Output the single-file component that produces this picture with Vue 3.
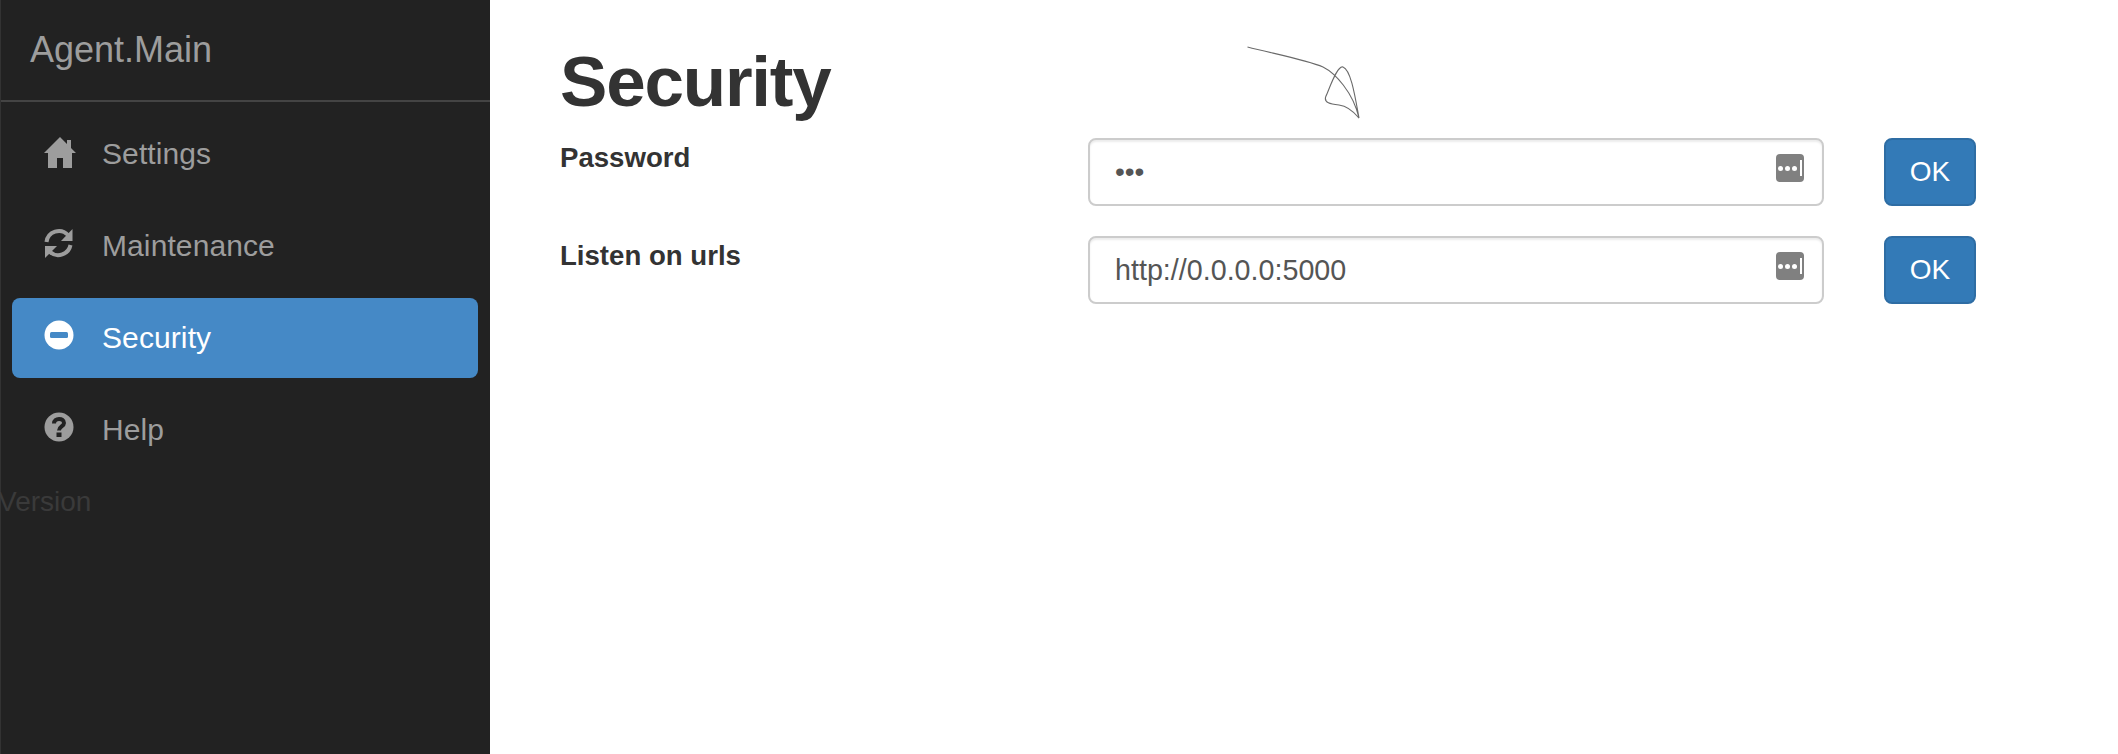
<script setup>
const items = [
  { label: 'Settings', icon: 'home' },
  { label: 'Maintenance', icon: 'refresh' },
  { label: 'Security', icon: 'minus', active: true },
  { label: 'Help', icon: 'help' },
]
const fields = [
  { label: 'Password', type: 'password', value: 'abc' },
  { label: 'Listen on urls', type: 'text', value: 'http://0.0.0.0:5000' },
]
</script>

<template>
  <div class="page">
    <aside class="sidebar">
      <div class="brand">Agent.Main</div>
      <nav class="nav">
        <a v-for="item in items" :key="item.label" class="nav-item" :class="{ active: item.active }">
          <svg class="nav-icon" viewBox="0 0 32 32" width="32" height="32" aria-hidden="true">
            <path v-if="item.icon === 'home'" fill="currentColor" d="M16 1 L23 8 V4 H27 V12 L32 17 H28 V32 H19 V22 H13 V32 H4 V17 H0 Z" />
            <g v-else-if="item.icon === 'refresh'" fill="none" stroke="currentColor" stroke-width="4">
              <path d="M2.5 14 A12.5 12.5 0 0 1 24 7" />
              <path d="M26.5 17 A12.5 12.5 0 0 1 6 24" />
              <path fill="currentColor" stroke="none" d="M28.5 1 V13 H17 Z" />
              <path fill="currentColor" stroke="none" d="M1 18 H13 L1 30 Z" />
            </g>
            <g v-else-if="item.icon === 'minus'">
              <circle cx="15" cy="15" r="14.5" fill="currentColor" />
              <rect x="6" y="12" width="18" height="6" rx="1.5" fill="#4589c6" />
            </g>
            <g v-else>
              <circle cx="15" cy="15" r="14.5" fill="currentColor" />
              <path fill="none" stroke="#222" stroke-width="4" d="M10 11.5 C10 5.5 20 5.5 20 11 C20 14.5 15 14.5 15 18.5" />
              <rect x="12.5" y="20.5" width="5" height="4.5" fill="#222" />
            </g>
          </svg>
          <span>{{ item.label }}</span>
        </a>
      </nav>
      <div class="version">Version</div>
    </aside>

    <main class="content">
      <h1 class="title">Security</h1>
      <form class="form" @submit.prevent>
        <div v-for="f in fields" :key="f.label" class="row">
          <label class="label">{{ f.label }}</label>
          <div class="input-box">
            <input class="input" :class="f.type" :type="f.type" :value="f.value" />
            <span class="key">
              <i></i><i></i><i></i><b></b>
            </span>
          </div>
          <button class="btn" type="button">OK</button>
        </div>
      </form>
      <svg class="scribble" viewBox="0 0 120 90" width="120" height="90" aria-hidden="true">
        <path fill="none" stroke="#6a6a6a" stroke-width="1.1" d="M0.5 1 C28 8 60 14 76 21 C88 27 106 46 112 72 C108 50 104 24 96 21 C90 19 82 44 79 50 C76 57 84 58 92 59 C100 60 107 66 112 72 L111 71" />
      </svg>
    </main>
  </div>
</template>

<style>
html, body { margin: 0; background: #fff; }
</style>

<style scoped>
.page {
  display: flex;
  width: 2118px;
  height: 754px;
  overflow: hidden;
  font-family: "Liberation Sans", Arial, sans-serif;
  color: #333;
}
.sidebar {
  width: 490px;
  flex: none;
  background: #222;
  display: flex;
  flex-direction: column;
  border-left: 1px solid #333;
  box-sizing: border-box;
}
.brand {
  height: 102px;
  box-sizing: border-box;
  padding: 30px 0 0 29px;
  font-size: 36px;
  line-height: 40px;
  color: #9d9d9d;
  border-bottom: 2px solid #444;
}
.nav {
  display: flex;
  flex-direction: column;
  gap: 12px;
  padding: 12px 12px 0 11px;
}
.nav-item {
  height: 80px;
  display: flex;
  align-items: center;
  gap: 26px;
  padding-left: 32px;
  border-radius: 8px;
  color: #9d9d9d;
  font-size: 30px;
  letter-spacing: 0.1px;
}
.nav-item.active {
  background: #4589c6;
  color: #fff;
}
.nav-icon { flex: none; margin-top: -4px; }
.version {
  margin-top: 12px;
  margin-left: -3px;
  font-size: 28px;
  line-height: 40px;
  color: #3a3a3a;
}
.content {
  position: relative;
  flex: 1;
  padding: 0 0 0 70px;
}
.title {
  margin: 41px 0 0;
  font-size: 71px;
  line-height: 82px;
  font-weight: 700;
  letter-spacing: -1.2px;
  color: #333;
}
.form { display: flex; flex-direction: column; gap: 30px; margin-top: 15px; }
.row { display: flex; align-items: flex-start; }
.label {
  width: 528px;
  flex: none;
  box-sizing: border-box;
  padding-top: 4px;
  font-size: 27.6px;
  font-weight: 700;
  line-height: 32px;
}
.input-box { position: relative; width: 736px; height: 68px; flex: none; }
.input {
  width: 100%;
  height: 100%;
  box-sizing: border-box;
  padding: 0 80px 0 25px;
  border: 2px solid #ccc;
  border-radius: 8px;
  box-shadow: inset 0 2px 2px rgba(0, 0, 0, 0.08);
  font: 28.7px "Liberation Sans", Arial, sans-serif;
  color: #555;
  outline: none;
}
.input.password { font-size: 28px; }
.key {
  position: absolute;
  right: 20px;
  top: 16px;
  width: 28px;
  height: 28px;
  background: #808080;
  border-radius: 4px;
  display: flex;
  align-items: center;
  gap: 2px;
  padding-left: 2px;
  box-sizing: border-box;
}
.key i { width: 5px; height: 5px; border-radius: 50%; background: #fff; }
.key b { width: 2px; height: 16px; background: #fff; margin-left: 1px; }
.btn {
  margin-left: 60px;
  width: 92px;
  height: 68px;
  background: #337ab7;
  border: 2px solid #2e6da4;
  border-radius: 8px;
  color: #fff;
  font: 28px "Liberation Sans", Arial, sans-serif;
  padding: 0;
}
.scribble { position: absolute; left: 757px; top: 46px; }
</style>
